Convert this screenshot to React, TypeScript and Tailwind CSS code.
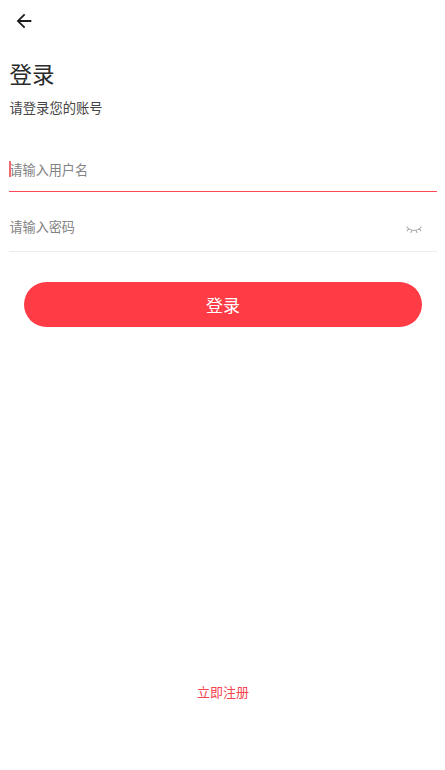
import { MdArrowBack } from "react-icons/md";

const ClosedEyeIcon = () => {
  return (
    <svg
      className="mt-1.5 h-2.5 w-4"
      viewBox="0 0 16 10"
      fill="none"
      stroke="#a8a8a8"
      strokeWidth="1.1"
      strokeLinecap="round"
    >
      <path d="M0.8 2C4.5 6.4 11.5 6.4 15.2 2M2.6 3.8L1.2 5.8M6 5.2L5 7.6M10 5.2L11 7.6M13.4 3.8L14.8 5.8" />
    </svg>
  );
};

const App: React.FC = () => {
  return (
    <div className="flex h-[770px] w-[445px] flex-col bg-white pr-2 pl-[9px] font-['Noto_Sans_CJK_SC',sans-serif]">
      <header className="flex h-[41px] shrink-0 items-center pl-1">
        <button type="button">
          <MdArrowBack className="size-[22px] text-[#1c1c1c]" />
        </button>
      </header>

      <h1 className="mt-4 pl-[0.5px] text-[22.5px] leading-8 text-[#2b2b2b]">
        登录
      </h1>
      <p className="mt-[9px] pl-[0.5px] text-[13.3px] leading-5 text-[#444444]">
        请登录您的账号
      </p>

      <form className="flex flex-col">
        <label className="relative mt-[31px] flex h-[43px] items-center border-b border-[#ff4a55] pl-[0.5px]">
          <span className="absolute top-[12px] left-0 h-4 w-0.5 bg-[#ef6b73]"></span>
          <input
            className="w-full text-[13.1px] leading-5 outline-none placeholder:text-[#838383]"
            placeholder="请输入用户名"
          />
        </label>
        <label className="flex h-[60px] items-center border-b border-[#ececec] pt-2.5 pr-[15px] pl-[0.5px]">
          <input
            className="min-w-0 grow text-[13.1px] leading-5 outline-none placeholder:text-[#838383]"
            type="password"
            placeholder="请输入密码"
          />
          <ClosedEyeIcon />
        </label>
        <button
          type="button"
          className="mt-[30px] mr-[15px] ml-[15px] h-[45px] rounded-full bg-[#ff3b45] text-[17px] leading-6 text-white"
        >
          登录
        </button>
      </form>

      <button
        type="button"
        className="mt-auto mb-[68px] self-center text-[13px] leading-5 text-[#f4434e]"
      >
        立即注册
      </button>
    </div>
  );
};

export default App;
